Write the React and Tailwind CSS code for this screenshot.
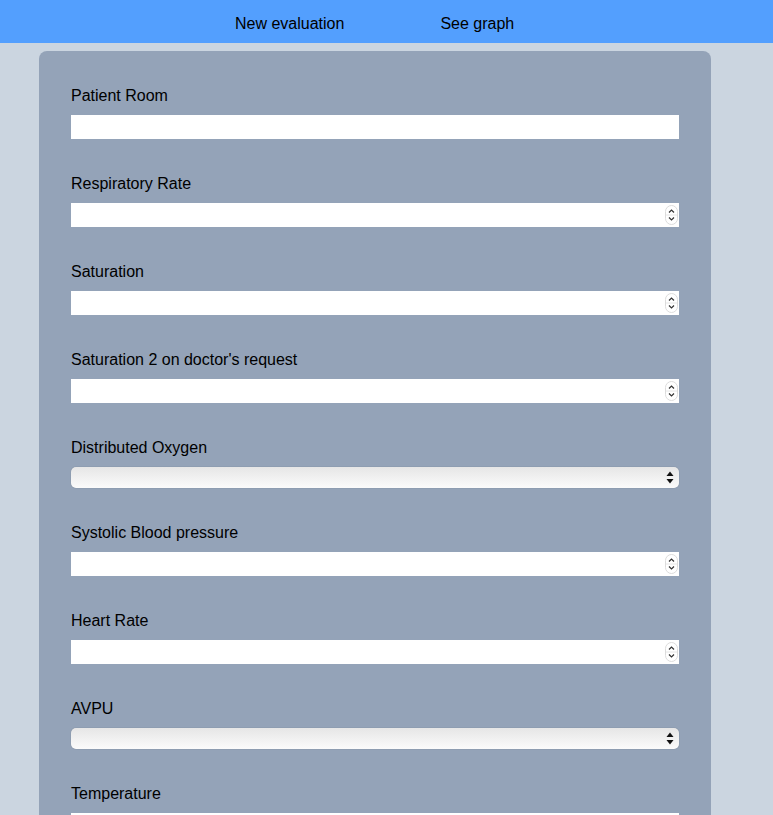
import React from "react";

const fields = [
  { label: "Patient Room", kind: "text" },
  { label: "Respiratory Rate", kind: "number" },
  { label: "Saturation", kind: "number" },
  { label: "Saturation 2 on doctor's request", kind: "number" },
  { label: "Distributed Oxygen", kind: "select" },
  { label: "Systolic Blood pressure", kind: "number" },
  { label: "Heart Rate", kind: "number" },
  { label: "AVPU", kind: "select" },
  { label: "Temperature", kind: "number" },
];

function Spinner() {
  return (
    <svg
      className="absolute right-[1px] top-[2px]"
      width="13"
      height="20"
      viewBox="0 0 13 20"
      fill="none"
    >
      <rect x="0.5" y="0.5" width="12" height="19" rx="6" fill="#fff" stroke="#dcdcdc" />
      <line x1="1" y1="10" x2="12" y2="10" stroke="#e6e6e6" />
      <path d="M4 7.5 L6.5 5 L9 7.5" stroke="#333" strokeWidth="1.2" />
      <path d="M4 12.5 L6.5 15 L9 12.5" stroke="#333" strokeWidth="1.2" />
    </svg>
  );
}

function SelectBox() {
  return (
    <div className="relative h-[21px] w-full rounded-[5px] bg-gradient-to-b from-[#e6e6e6] to-[#fbfbfb] shadow-[0_0_1px_rgba(0,0,0,0.35)]">
      <svg
        className="absolute right-[5px] top-[4px]"
        width="8"
        height="13"
        viewBox="0 0 8 13"
      >
        <path d="M4 0.5 L7.5 5 L0.5 5 Z" fill="#111" />
        <path d="M4 12.5 L7.5 8 L0.5 8 Z" fill="#111" />
      </svg>
    </div>
  );
}

export default function App() {
  return (
    <div className="min-h-screen bg-[#cbd5e0] font-['Liberation_Sans',Arial,sans-serif] text-black">
      {/* Top nav */}
      <nav className="flex h-[43px] items-center bg-[#539ffe] pl-[235px] pt-1 text-base">
        <a className="cursor-pointer">New evaluation</a>
        <a className="ml-[96px] cursor-pointer">See graph</a>
      </nav>

      {/* Form card */}
      <div className="ml-[39px] mt-2 w-[672px] rounded-lg bg-[#94a3b8] px-8 pt-8 pb-8">
        <div className="flex flex-col gap-8">
          {fields.map((f) => (
            <div key={f.label} className="flex flex-col">
              <label className="mb-[7px] pt-px text-base leading-6">{f.label}</label>
              {f.kind === "select" ? (
                <SelectBox />
              ) : (
                <div className="relative">
                  <input type="text" className="block h-6 w-full bg-white px-1 outline-none" />
                  {f.kind === "number" && <Spinner />}
                </div>
              )}
            </div>
          ))}
        </div>
      </div>
    </div>
  );
}
